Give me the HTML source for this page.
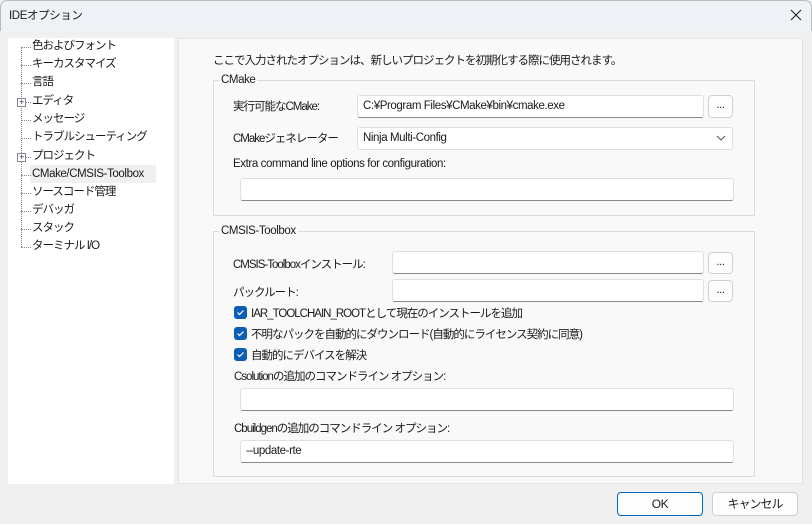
<!DOCTYPE html>
<html><head><meta charset="utf-8"><style>
*{box-sizing:border-box;margin:0;padding:0}
body{width:812px;height:524px;background:#f0f0f0;font-family:"Liberation Sans","Noto Sans CJK JP",sans-serif;font-size:11.5px;letter-spacing:-0.4px;color:#1a1a1a;position:relative;overflow:hidden}
.a{position:absolute;white-space:nowrap}
.j{letter-spacing:-1px}
.title{left:0;top:0;width:812px;height:31px;background:#eef2f6;border:1px solid #bbb;border-bottom:none;border-radius:7px 7px 0 0}
.tree{left:8px;top:38px;width:166px;height:446px;background:#fff}
.panel{left:178px;top:38px;width:625px;height:446px;background:#f9f9f9;border:1px solid #e3e3e3}
.grp{border:1px solid #dcdcdc}
.leg{background:#f9f9f9;padding:0 2px;line-height:14px}
.inp{background:#fff;border:1px solid #e0e0e0;border-bottom:1px solid #888;border-radius:3px;padding-left:5px;line-height:21px}
.btn{background:#fdfdfd;border:1px solid #d0d0d0;border-radius:4px;text-align:center;line-height:18px;font-size:11px}
.cb{width:13px;height:13px;background:#0a5fb4;border-radius:3px}
.cb svg{display:block}
.ti{left:24px;line-height:16px}
.dot{border-top:1px dotted #888;width:10px}
</style></head><body>
<div class="a title"></div>
<div class="a" style="left:9px;top:7px">IDEオプション</div>
<svg class="a" style="left:790px;top:9px" width="12" height="12"><path d="M1 1L11 11M11 1L1 11" stroke="#222" stroke-width="1.1"/></svg>

<div class="a tree">
<div class="a" style="left:13px;top:9px;height:200px;border-left:1px dotted #888"></div>
</div>
<div class="a" style="left:8px;top:38px;width:166px">
<div class="a dot" style="left:13px;top:9px"></div><div class="a ti j" style="top:0">色およびフォント</div>
<div class="a dot" style="left:13px;top:27px"></div><div class="a ti j" style="top:18px">キーカスタマイズ</div>
<div class="a dot" style="left:13px;top:45px"></div><div class="a ti j" style="top:36px">言語</div>
<div class="a dot" style="left:13px;top:64px"></div><div class="a ti j" style="top:55px">エディタ</div>
<div class="a" style="left:9px;top:60px;width:9px;height:9px;border:1px solid #888;background:#fff;font-size:9px;line-height:7px;text-align:center;color:#236">+</div>
<div class="a dot" style="left:13px;top:82px"></div><div class="a ti j" style="top:73px">メッセージ</div>
<div class="a dot" style="left:13px;top:100px"></div><div class="a ti j" style="top:91px">トラブルシューティング</div>
<div class="a dot" style="left:13px;top:119px"></div><div class="a ti j" style="top:110px">プロジェクト</div>
<div class="a" style="left:9px;top:115px;width:9px;height:9px;border:1px solid #888;background:#fff;font-size:9px;line-height:7px;text-align:center;color:#236">+</div>
<div class="a" style="left:22px;top:127px;width:126px;height:18px;background:#f0f0f0"></div>
<div class="a dot" style="left:13px;top:137px"></div><div class="a ti" style="top:128px">CMake/CMSIS-Toolbox</div>
<div class="a dot" style="left:13px;top:155px"></div><div class="a ti j" style="top:146px">ソースコード管理</div>
<div class="a dot" style="left:13px;top:173px"></div><div class="a ti j" style="top:164px">デバッガ</div>
<div class="a dot" style="left:13px;top:191px"></div><div class="a ti j" style="top:182px">スタック</div>
<div class="a dot" style="left:13px;top:209px"></div><div class="a ti j" style="top:200px">ターミナル I/O</div>
</div>

<div class="a panel"></div>
<div class="a j" style="left:213px;top:52px">ここで入力されたオプションは、新しいプロジェクトを初期化する際に使用されます。</div>

<div class="a grp" style="left:213px;top:80px;width:542px;height:136px"></div>
<div class="a leg" style="left:219px;top:73px">CMake</div>
<div class="a j" style="left:233px;top:98px">実行可能なCMake:</div>
<div class="a inp" style="left:357px;top:95px;width:347px;height:23px">C:¥Program Files¥CMake¥bin¥cmake.exe</div>
<div class="a btn" style="left:708px;top:95px;width:25px;height:23px">...</div>
<div class="a j" style="left:233px;top:130px">CMakeジェネレーター</div>
<div class="a inp" style="left:357px;top:127px;width:376px;height:23px;border-bottom-color:#e0e0e0">Ninja Multi-Config</div>
<svg class="a" style="left:716px;top:135px" width="10" height="6"><path d="M1 1L5 5L9 1" fill="none" stroke="#555"/></svg>
<div class="a" style="left:233px;top:158px">Extra command line options for configuration:</div>
<div class="a inp" style="left:240px;top:178px;width:494px;height:23px"></div>

<div class="a grp" style="left:213px;top:231px;width:542px;height:246px"></div>
<div class="a leg" style="left:219px;top:224px">CMSIS-Toolbox</div>
<div class="a j" style="left:233px;top:256px">CMSIS-Toolboxインストール:</div>
<div class="a inp" style="left:392px;top:251px;width:312px;height:23px"></div>
<div class="a btn" style="left:708px;top:252px;width:25px;height:22px">...</div>
<div class="a j" style="left:233px;top:284px">パックルート:</div>
<div class="a inp" style="left:392px;top:279px;width:312px;height:23px"></div>
<div class="a btn" style="left:708px;top:280px;width:25px;height:22px">...</div>
<div class="a cb" style="left:234px;top:306px"><svg width="13" height="13"><path d="M3.5 6.5L5.5 8.5L9.5 4.5" fill="none" stroke="#fff" stroke-width="1.2"/></svg></div>
<div class="a j" style="left:251px;top:305px">IAR_TOOLCHAIN_ROOTとして現在のインストールを追加</div>
<div class="a cb" style="left:234px;top:327px"><svg width="13" height="13"><path d="M3.5 6.5L5.5 8.5L9.5 4.5" fill="none" stroke="#fff" stroke-width="1.2"/></svg></div>
<div class="a j" style="left:251px;top:326px">不明なパックを自動的にダウンロード(自動的にライセンス契約に同意)</div>
<div class="a cb" style="left:234px;top:348px"><svg width="13" height="13"><path d="M3.5 6.5L5.5 8.5L9.5 4.5" fill="none" stroke="#fff" stroke-width="1.2"/></svg></div>
<div class="a j" style="left:251px;top:347px">自動的にデバイスを解決</div>
<div class="a j" style="left:234px;top:368px">Csolutionの追加のコマンドライン オプション:</div>
<div class="a inp" style="left:240px;top:388px;width:494px;height:23px"></div>
<div class="a j" style="left:234px;top:420px">Cbuildgenの追加のコマンドライン オプション:</div>
<div class="a inp" style="left:240px;top:440px;width:494px;height:23px">--update-rte</div>

<div class="a btn" style="left:617px;top:492px;width:86px;height:24px;line-height:22px;font-size:12px;border:1px solid #0067c0">OK</div>
<div class="a btn j" style="left:712px;top:492px;width:86px;height:24px;line-height:22px;font-size:12px">キャンセル</div>
</body></html>
